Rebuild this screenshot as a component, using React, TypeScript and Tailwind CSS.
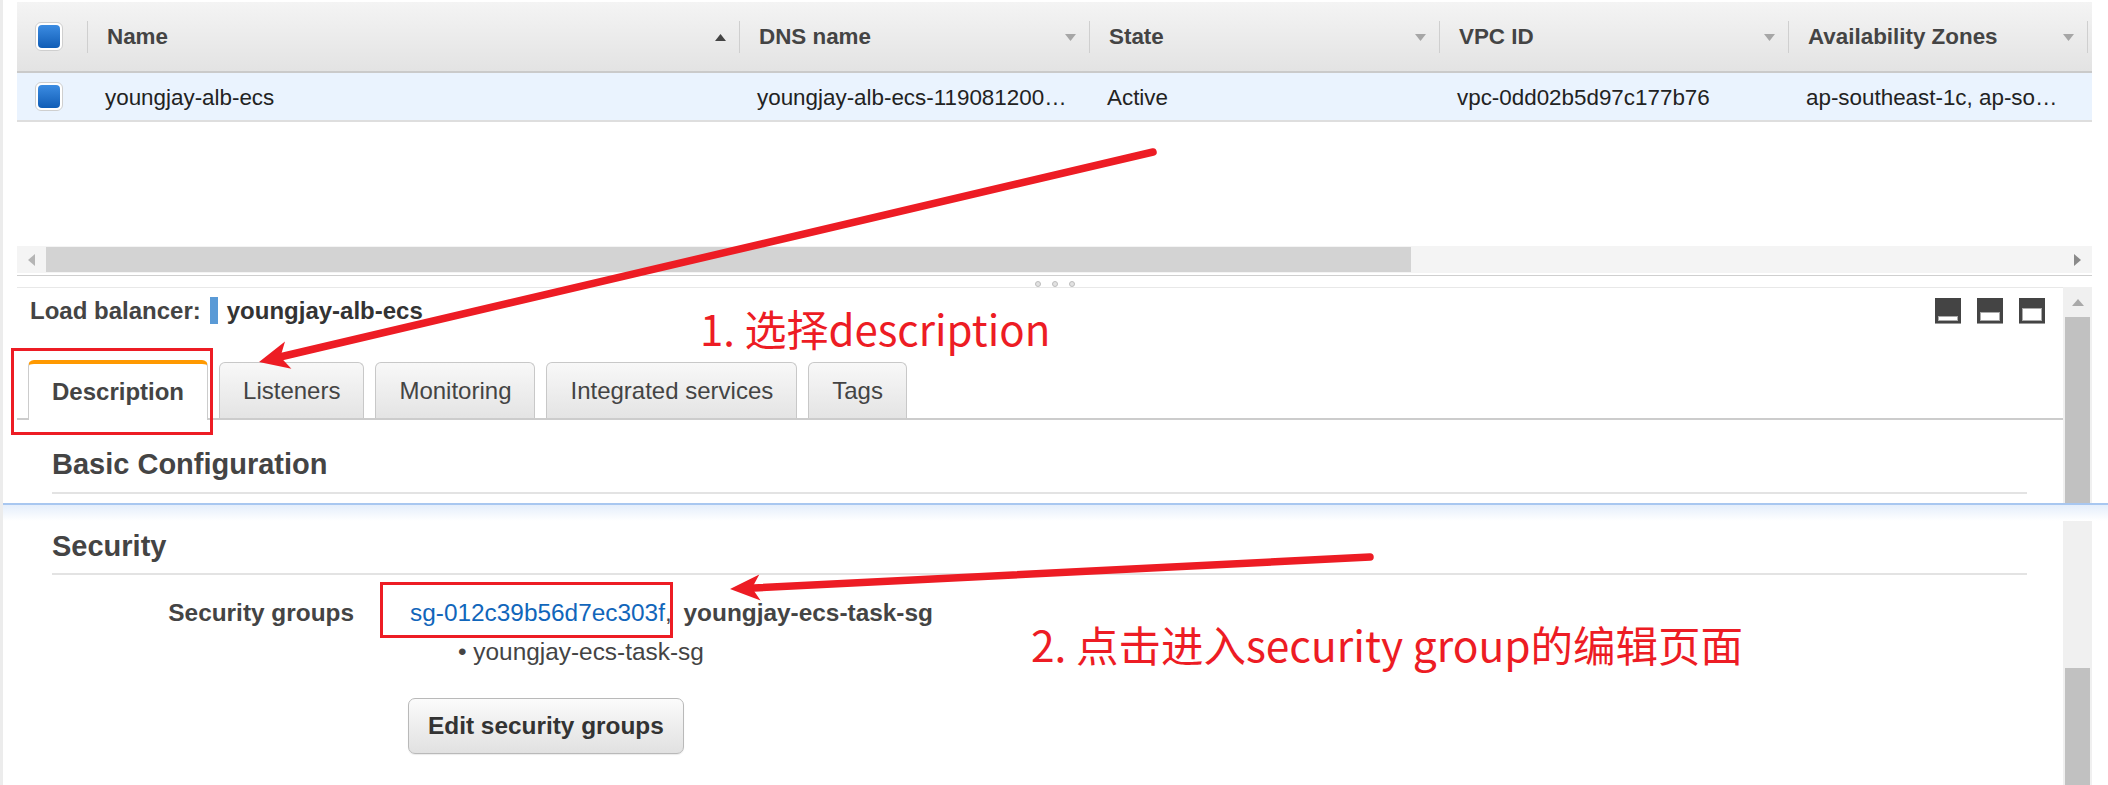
const RED = '#ed1c24'

function Checkbox() {
  return (
    <div className="w-[28px] h-[29px] rounded-[6px] border border-[#cfcfcf] bg-white p-[2px] flex">
      <div className="flex-1 rounded-[4px] bg-linear-to-b from-[#3b8ce2] to-[#0f5db6]" />
    </div>
  )
}

function SortTri({ up }: { up?: boolean }) {
  return (
    <svg width="11" height="7" viewBox="0 0 11 7" className="shrink-0">
      {up ? <path d="M0 7 L5.5 0 L11 7 Z" fill="#444" /> : <path d="M0 0 L11 0 L5.5 7 Z" fill="#a6a6a6" />}
    </svg>
  )
}

const columns = [
  { label: 'Name', w: 'w-[652px]', up: true, value: 'youngjay-alb-ecs' },
  { label: 'DNS name', w: 'w-[350px]', up: false, value: 'youngjay-alb-ecs-119081200…' },
  { label: 'State', w: 'w-[350px]', up: false, value: 'Active' },
  { label: 'VPC ID', w: 'w-[349px]', up: false, value: 'vpc-0dd02b5d97c177b76' },
  { label: 'Availability Zones', w: 'w-[299px]', up: false, value: 'ap-southeast-1c, ap-so…' },
]

const tabs = ['Description', 'Listeners', 'Monitoring', 'Integrated services', 'Tags']

function PanelIcon({ h }: { h: string }) {
  return (
    <div className="w-[26px] h-[26px] bg-[#444] border-b border-[#999] flex items-end justify-center pb-[2px]">
      <div className={`w-[20px] ${h} bg-white border border-[#aaa]`} />
    </div>
  )
}

export default function App() {
  return (
    <div className="relative w-[2108px] h-[785px] overflow-hidden bg-white border-l-[3px] border-[#ececec] font-['Liberation_Sans',sans-serif]">
      {/* upper screenshot */}
      <div className="h-[503px] overflow-hidden pt-[2px] pl-[14px]">
        <div className="w-[2075px]">
          {/* table header */}
          <div className="h-[71px] flex items-center bg-linear-to-b from-[#f4f4f4] to-[#e3e3e3] border-b-2 border-[#cacaca]">
            <div className="w-[71px] h-full flex items-center pl-[18px]">
              <Checkbox />
              <span className="ml-auto w-px h-[32px] bg-[#cfcfcf]" />
            </div>
            {columns.map(c => (
              <div key={c.label} className={`${c.w} h-full flex items-center pt-[1px]`}>
                <span className="flex-1 pl-[19px] text-[22.4px] font-bold text-[#444]">{c.label}</span>
                <SortTri up={c.up} />
                <span className="ml-[13px] w-px h-[32px] bg-[#cfcfcf]" />
              </div>
            ))}
          </div>

          {/* selected row */}
          <div className="h-[49px] flex items-center bg-[#eaf3fe] border-b-2 border-[#dedede]">
            <div className="w-[71px] flex items-center pl-[18px]">
              <Checkbox />
            </div>
            {columns.map(c => (
              <div key={c.label} className={`${c.w} pl-[17px] pr-[18px] pt-[2px] whitespace-nowrap overflow-hidden text-[22.4px] text-[#222]`}>
                {c.value}
              </div>
            ))}
          </div>

          <div className="h-[124px]" />

          {/* horizontal scrollbar */}
          <div className="h-[27px] flex bg-[#f4f4f4]">
            <div className="w-[29px] flex items-center justify-center">
              <svg width="7" height="12" viewBox="0 0 7 12"><path d="M7 0 L0 6 L7 12 Z" fill="#b5b5b5" /></svg>
            </div>
            <div className="w-[1365px] my-[1px] bg-[#d3d3d3]" />
            <div className="flex-1" />
            <div className="w-[29px] flex items-center justify-center">
              <svg width="7" height="12" viewBox="0 0 7 12"><path d="M0 0 L7 6 L0 12 Z" fill="#8a8a8a" /></svg>
            </div>
          </div>
          <div className="mt-[2px] h-px bg-[#cfcfcf]" />

          {/* drag handle */}
          <div className="h-[11px] flex items-end justify-center gap-[11px]">
            {[0, 1, 2].map(i => (
              <span key={i} className="w-[6px] h-[6px] rounded-full bg-[#e2e2e2] border border-[#bdbdbd]" />
            ))}
          </div>

          {/* details panel */}
          <div className="flex">
            <div className="w-[2046px] border-t border-[#e8e8e8]">
              <div className="h-[44px] flex items-center pl-[13px] pr-[18px] pt-[1px]">
                <span className="text-[24px] font-bold text-[#444]">Load balancer:</span>
                <span className="ml-[9px] w-[8px] h-[27px] bg-[#5a9ad6]" />
                <span className="ml-[9px] text-[24px] font-bold text-[#333]">youngjay-alb-ecs</span>
                <div className="ml-auto flex gap-[16px]">
                  <PanelIcon h="h-[5px]" />
                  <PanelIcon h="h-[9px]" />
                  <PanelIcon h="h-[13px]" />
                </div>
              </div>

              <div className="mt-[28px] h-[60px] flex items-end gap-[11px] pl-[11px] border-b-2 border-[#cccccc]">
                {tabs.map((t, i) =>
                  i === 0 ? (
                    <div key={t} className="relative -mb-[2px] h-[60px] px-[23px] flex items-center bg-white border border-b-0 border-[#cccccc] border-t-[4px] border-t-[#ff9900] rounded-t-[6px] text-[24px] font-bold text-[#444]">
                      {t}
                    </div>
                  ) : (
                    <div key={t} className="h-[56px] px-[23px] flex items-center bg-linear-to-b from-[#f8f8f8] to-[#e4e4e4] border border-b-0 border-[#c8c8c8] rounded-t-[6px] text-[24px] text-[#444]">
                      {t}
                    </div>
                  )
                )}
              </div>

              <div className="mt-[26px] ml-[35px] mr-[36px] pb-[10px] border-b-2 border-[#e3e3e3]">
                <h2 className="text-[29px] leading-[36px] font-bold text-[#444]">Basic Configuration</h2>
              </div>
            </div>

            {/* vertical scrollbar */}
            <div className="w-[29px] h-[220px] bg-[#f0f0f0] flex flex-col items-center">
              <div className="h-[30px] flex items-center">
                <svg width="12" height="7" viewBox="0 0 12 7"><path d="M0 7 L6 0 L12 7 Z" fill="#a9a9a9" /></svg>
              </div>
              <div className="w-[25px] flex-1 bg-[#c1c1c1]" />
            </div>
          </div>
        </div>
      </div>

      {/* seam between the two captures */}
      <div className="h-[2px] bg-[#a8c7f0]" />

      {/* lower screenshot */}
      <div className="relative h-[280px] flex">
        <div className="absolute inset-x-0 top-0 h-[16px] bg-linear-to-b from-[#e4eefb] to-white pointer-events-none" />
        <div className="w-[2060px] pl-[49px] pr-[36px]">
          <div className="mt-[23px] pb-[9px] border-b-2 border-[#e3e3e3]">
            <h2 className="text-[29px] leading-[36px] font-bold text-[#444]">Security</h2>
          </div>

          <div className="mt-[22px] flex text-[24.4px] leading-[32px]">
            <div className="w-[302px] text-right font-bold text-[#444]">Security groups</div>
            <div className="ml-[56px]">
              <div className="whitespace-nowrap">
                <span className="text-[#1166bb]">sg-012c39b56d7ec303f</span>
                <span className="text-[#444]">, </span>
                <span className="ml-[5px] font-bold text-[#444]">youngjay-ecs-task-sg</span>
              </div>
              <div className="mt-[7px] pl-[48px] text-[#444]">• youngjay-ecs-task-sg</div>
              <button className="mt-[30px] -ml-[2px] h-[56px] px-[19px] rounded-[7px] border border-[#b9b9b9] bg-linear-to-b from-[#fbfbfb] to-[#e1e1e1] shadow-[0_1px_1px_rgba(0,0,0,0.08)] text-[24.4px] font-bold text-[#333]">
                Edit security groups
              </button>
            </div>
          </div>
        </div>

        <div className="w-[29px] bg-[#f0f0f0] flex flex-col items-center">
          <div className="h-[163px]" />
          <div className="w-[25px] flex-1 bg-[#c1c1c1]" />
        </div>
      </div>

      {/* annotations */}
      <svg className="absolute left-[-3px] top-0 pointer-events-none" width="2108" height="785" viewBox="0 0 2108 785">
        <rect x="12.5" y="349.5" width="199" height="84" fill="none" stroke={RED} strokeWidth="3" />
        <rect x="381.5" y="583.5" width="290" height="53" fill="none" stroke={RED} strokeWidth="3" />
        <line x1="1153" y1="152" x2="282" y2="356.5" stroke={RED} strokeWidth="7.5" strokeLinecap="round" />
        <polygon points="259,362 285,341.5 280.4,357 291.4,368.7" fill={RED} />
        <line x1="1370" y1="557" x2="754" y2="588" stroke={RED} strokeWidth="7.5" strokeLinecap="round" />
        <polygon points="730,589 759.3,574.5 752,587.9 760.6,600.5" fill={RED} />
      </svg>
      <div className="absolute left-[697px] top-[307px] text-[42px] leading-none text-[#ed1c24] whitespace-nowrap font-['Noto_Sans_CJK_SC',sans-serif]">
        1. 选择description
      </div>
      <div className="absolute left-[1028px] top-[623px] text-[42.5px] leading-none text-[#ed1c24] whitespace-nowrap font-['Noto_Sans_CJK_SC',sans-serif]">
        2. 点击进入security group的编辑页面
      </div>
    </div>
  )
}
